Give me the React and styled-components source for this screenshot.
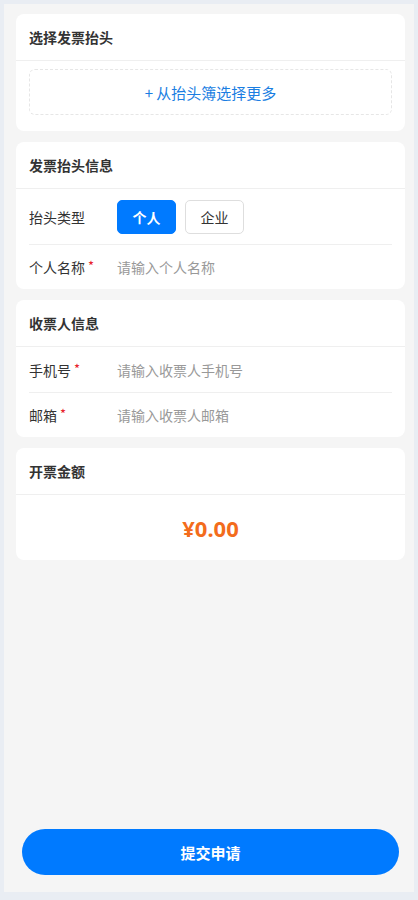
import React, { useState } from "react";
import styled, { createGlobalStyle } from "styled-components";

const GlobalStyle = createGlobalStyle`
  html, body {
    margin: 0;
    padding: 0;
    background: #e9edf3;
    font-family: "Noto Sans CJK SC", "Noto Sans", sans-serif;
  }
  * {
    box-sizing: border-box;
  }
`;

const Page = styled.div`
  margin: 4px 4px 0 4px;
  height: 888px;
  background: #f5f5f5;
  display: flex;
  flex-direction: column;
  gap: 11px;
  padding: 10px 9px 17px 12px;
`;

const Card = styled.div`
  background: #fff;
  border-radius: 8px;
  overflow: hidden;
`;

const CardHeader = styled.div`
  height: 47px;
  display: flex;
  align-items: center;
  padding: 0 13px;
  font-size: 14px;
  font-weight: 700;
  color: #333;
  border-bottom: 1px solid #efefef;
`;

const PickerBody = styled.div`
  padding: 8px 13px 16px;
`;

const PickerBox = styled.div`
  height: 46px;
  border: 1px dashed #e6e6e6;
  border-radius: 6px;
  display: flex;
  align-items: center;
  justify-content: center;
  font-size: 15px;
  color: #1a7ee2;
`;

const Row = styled.div`
  height: ${(props) => props.height || 45}px;
  display: flex;
  align-items: center;
  margin: 0 13px;
  border-top: ${(props) => (props.divided ? "1px solid #efefef" : "none")};
`;

const Label = styled.div`
  width: 88px;
  flex-shrink: 0;
  font-size: 14px;
  color: #333;
`;

const Star = styled.span`
  color: #e8202a;
  margin-left: 3px;
  font-size: 13px;
  position: relative;
  top: -2px;
`;

const Field = styled.input`
  flex: 1;
  border: none;
  outline: none;
  padding: 0;
  font-size: 14px;
  font-family: inherit;
  color: #333;
  background: transparent;

  &::placeholder {
    color: #999;
  }
`;

const TypeGroup = styled.div`
  display: flex;
  gap: 9px;
`;

const TypeButton = styled.button`
  width: 59px;
  height: 34px;
  border-radius: 5px;
  font-size: 14px;
  font-family: inherit;
  font-weight: ${(props) => (props.active ? 700 : 400)};
  color: ${(props) => (props.active ? "#fff" : "#333")};
  background: ${(props) => (props.active ? "#007aff" : "#fff")};
  border: 1px solid ${(props) => (props.active ? "#007aff" : "#dedede")};
  cursor: pointer;
`;

const Amount = styled.div`
  height: 65px;
  display: flex;
  align-items: center;
  justify-content: center;
  font-size: 22px;
  font-weight: 700;
  color: #f36c1c;
  font-family: "Noto Sans", "Noto Sans CJK SC", sans-serif;
`;

const Spacer = styled.div`
  flex: 1;
`;

const SubmitButton = styled.button`
  margin: 0 6px;
  height: 46px;
  border: none;
  border-radius: 23px;
  background: #007aff;
  color: #fff;
  font-size: 15px;
  font-weight: 700;
  font-family: inherit;
  cursor: pointer;
`;

const App = () => {
  const [type, setType] = useState("personal");

  return (
    <>
      <GlobalStyle />
      <Page>
        <Card>
          <CardHeader>选择发票抬头</CardHeader>
          <PickerBody>
            <PickerBox>+ 从抬头簿选择更多</PickerBox>
          </PickerBody>
        </Card>

        <Card>
          <CardHeader>发票抬头信息</CardHeader>
          <Row height={55}>
            <Label>抬头类型</Label>
            <TypeGroup>
              <TypeButton
                active={type === "personal"}
                onClick={() => setType("personal")}
              >
                个人
              </TypeButton>
              <TypeButton
                active={type === "company"}
                onClick={() => setType("company")}
              >
                企业
              </TypeButton>
            </TypeGroup>
          </Row>
          <Row divided>
            <Label>
              个人名称<Star>*</Star>
            </Label>
            <Field placeholder="请输入个人名称" />
          </Row>
        </Card>

        <Card>
          <CardHeader>收票人信息</CardHeader>
          <Row>
            <Label>
              手机号<Star>*</Star>
            </Label>
            <Field placeholder="请输入收票人手机号" />
          </Row>
          <Row divided>
            <Label>
              邮箱<Star>*</Star>
            </Label>
            <Field placeholder="请输入收票人邮箱" />
          </Row>
        </Card>

        <Card>
          <CardHeader>开票金额</CardHeader>
          <Amount>¥0.00</Amount>
        </Card>

        <Spacer />
        <SubmitButton>提交申请</SubmitButton>
      </Page>
    </>
  );
};

export default App;
